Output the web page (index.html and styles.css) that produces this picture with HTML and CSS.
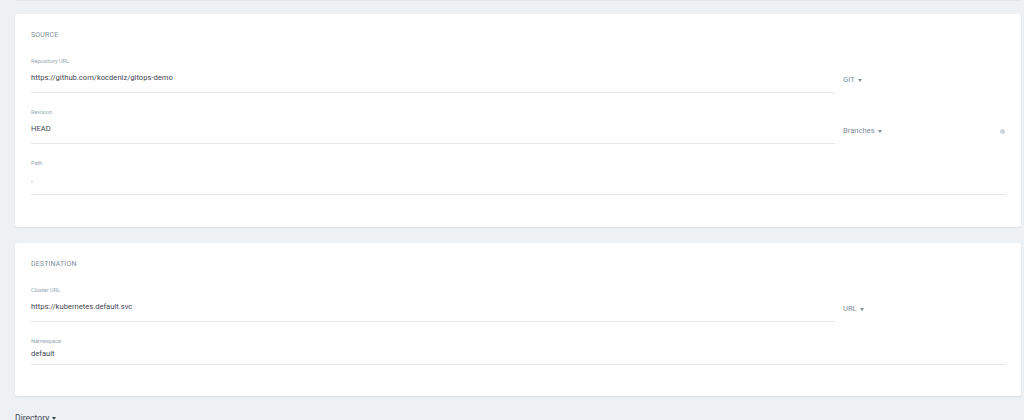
FILE: index.html
```html
<!DOCTYPE html>
<html lang="en">
<head>
<meta charset="utf-8">
<title>Application</title>
<link rel="stylesheet" href="styles.css">
</head>
<body>
<div class="page">
  <div class="prev-edge"></div>

  <section class="card">
    <h3 class="card-title">SOURCE</h3>
    <div class="row">
      <div class="field">
        <div class="label">Repository URL</div>
        <div class="input">https://github.com/kocdeniz/gitops-demo</div>
      </div>
      <div class="side"><span class="dropdown">GIT<i class="caret"></i></span></div>
    </div>
    <div class="row">
      <div class="field">
        <div class="label">Revision</div>
        <div class="input">HEAD</div>
      </div>
      <div class="side">
        <span class="dropdown">Branches<i class="caret"></i></span>
        <i class="info"></i>
      </div>
    </div>
    <div class="row">
      <div class="field">
        <div class="label">Path</div>
        <div class="input">.</div>
      </div>
    </div>
  </section>

  <section class="card">
    <h3 class="card-title">DESTINATION</h3>
    <div class="row">
      <div class="field">
        <div class="label">Cluster URL</div>
        <div class="input">https://kubernetes.default.svc</div>
      </div>
      <div class="side"><span class="dropdown">URL<i class="caret"></i></span></div>
    </div>
    <div class="row">
      <div class="field compact">
        <div class="label">Namespace</div>
        <div class="input">default</div>
      </div>
    </div>
  </section>

  <div class="source-type"><span class="dropdown dark">Directory<i class="caret"></i></span></div>
</div>
</body>
</html>
```

FILE: styles.css
```css
* { box-sizing: border-box; }

html, body {
  margin: 0;
  padding: 0;
  background: #eef1f4;
  font-family: Roboto, "Liberation Sans", Arial, sans-serif;
  color: #363c4a;
  overflow: hidden;
}

.page {
  padding: 0 3px 0 15px;
}

.prev-edge {
  height: 1px;
  background: #e2e7eb;
  margin-bottom: 13px;
}

.card {
  background: #fff;
  border-radius: 3px;
  box-shadow: 0 1px 2px rgba(0, 0, 0, 0.08);
  padding: 15px 15px 32px 16px;
  margin-bottom: 16px;
}

.card + .card { padding-bottom: 31px; }

.card-title {
  margin: 0 0 15px;
  font-size: 7px;
  font-weight: 400;
  line-height: 12px;
  color: #7d8e99;
  letter-spacing: 0.15px;
}

.row {
  display: flex;
  align-items: flex-start;
  gap: 8px;
}

.field {
  flex: 1;
  margin-bottom: 14px;
}

.row:last-child .field { margin-bottom: 0; }

.label {
  font-size: 5.6px;
  line-height: 10px;
  color: #96a7b3;
}

.input {
  font-size: 7.6px;
  line-height: 12px;
  padding: 6px 0 8px;
  border-bottom: 1px solid #e1e7ec;
  color: #3f4654;
}

.field.compact .input {
  padding: 2px 0 4px;
}

.side {
  width: 163px;
  padding-top: 18px;
  display: flex;
  align-items: center;
  justify-content: space-between;
}

.dropdown {
  display: inline-flex;
  align-items: center;
  gap: 3px;
  font-size: 7.6px;
  line-height: 12px;
  color: #7d8e99;
}

.dropdown.dark {
  color: #3f4654;
  font-size: 8.6px;
}

.caret {
  display: inline-block;
  width: 0;
  height: 0;
  border-left: 2.5px solid transparent;
  border-right: 2.5px solid transparent;
  border-top: 3px solid currentColor;
}

.info {
  display: inline-block;
  width: 5px;
  height: 5px;
  border-radius: 50%;
  background: #cdd5db;
  margin-right: 1px;
}

.source-type {
  margin-top: -2px;
  line-height: 12px;
}
```
